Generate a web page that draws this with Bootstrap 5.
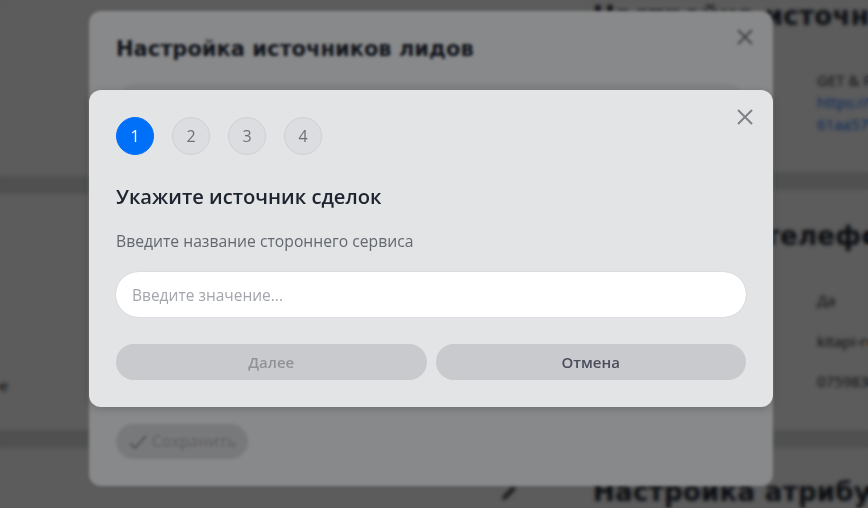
<!DOCTYPE html>
<html lang="ru">
    <head>
        <meta charset="UTF-8">
        <meta name="viewport" content="width=device-width, initial-scale=1.0">
        <title>Настройка источников лидов</title>
        <link href="https://cdn.jsdelivr.net/npm/bootstrap@5.3.3/dist/css/bootstrap.min.css" rel="stylesheet">
        <style>
            html, body {
                height: 100%;
                overflow: hidden;
            }
            body {
                background-color: #dedfdf;
                font-family: "Open Sans", "Noto Sans", sans-serif;
                color: #1e2530;
            }
            /* page under the dialogs */
            .page-grid {
                display: grid;
                grid-template-columns: 565px 1fr;
                height: 100%;
            }
            .page-col {
                display: flex;
                flex-direction: column;
                gap: 18px;
            }
            .page-panel {
                background: #fff;
                padding-left: 28px;
                flex: none;
                overflow: hidden;
                white-space: nowrap;
            }
            .panel-a { height: 172px; }
            .panel-b { height: 240px; padding-top: 30px; }
            .panel-c { height: 80px; padding-top: 28px; }
            .left-a { height: 176px; }
            .left-b { height: 236px; }
            .left-c {
                height: 80px;
                position: relative;
            }
            .panel-title {
                font-family: "DejaVu Sans", "Noto Sans", sans-serif;
                font-weight: 700;
                font-size: 26px;
                letter-spacing: .3px;
                line-height: 32px;
                margin: 0;
            }
            .panel-values {
                padding-left: 224px;
                margin-top: 37px;
                font-size: 15px;
                line-height: 22px;
            }
            .panel-values-b {
                gap: 18.5px;
            }
            .page-link-text {
                color: #0d6efd;
                text-decoration: none;
            }
            .stub-word {
                font-size: 15px;
                margin-top: 181px;
                margin-left: -28px;
                display: block;
                line-height: 20px;
            }
            .pencil-mark {
                position: absolute;
                left: 499px;
                top: 34px;
            }
            /* dialogs */
            .dim-layer {
                position: fixed;
                inset: 0;
                background: rgba(0, 0, 0, .4);
                backdrop-filter: blur(1.5px);
            }
            .sheet {
                position: fixed;
                left: 89px;
                width: 684px;
                background: #e3e4e6;
                border-radius: 12px;
                padding: 26px;
            }
            .sheet-back {
                top: 11px;
                height: 475px;
            }
            .sheet-front {
                top: 90px;
                height: 317px;
                padding-top: 27px;
                box-shadow: 0 2px 8px rgba(0, 0, 0, .2);
            }
            .sheet-x {
                position: absolute;
                top: 17px;
                right: 19px;
                width: 18px;
                height: 18px;
                padding: 0;
                border: 0;
                background: none;
                line-height: 0;
            }
            .sheet-front .sheet-x {
                top: 18px;
            }
            .back-title {
                font-family: "DejaVu Sans", "Noto Sans", sans-serif;
                font-weight: 700;
                font-size: 21px;
                line-height: 24px;
                margin: 0 0 22px 1px;
            }
            .back-field {
                height: 48px;
                background: #d9dadc;
                border-radius: 24px;
            }
            .back-save {
                position: absolute;
                left: 27px;
                top: 413px;
                height: 35px;
                width: 132px;
                background: #c9cacd;
                color: #a9abb0;
                border-radius: 18px;
                font-size: 15.5px;
                font-weight: 600;
            }
            .step-row {
                gap: 18px;
                margin-left: 1px;
                margin-bottom: 27px;
            }
            .step-dot {
                width: 38px;
                height: 38px;
                border-radius: 50%;
                border: 1px solid #cfd0d3;
                background: #dcdde0;
                color: #6c7078;
                font-size: 16px;
            }
            .step-dot.is-current {
                background: #0070f8;
                border-color: #0070f8;
                color: #fff;
            }
            .step-title {
                font-size: 20.15px;
                font-weight: 600;
                line-height: 28px;
                color: #1e2530;
                margin: 0 0 21px 1px;
            }
            .step-hint {
                font-size: 15.7px;
                line-height: 20px;
                color: #63676f;
                margin: 0 0 20px 1px;
            }
            .value-input.form-control {
                height: 47px;
                border-radius: 24px;
                border: 1px solid #dcdde0;
                padding: 0 16px;
                font-size: 15.5px;
                box-shadow: none;
                margin-bottom: 26px;
            }
            .value-input::placeholder {
                color: #a3a6ac;
            }
            .step-btn.btn {
                height: 36px;
                border: 0;
                border-radius: 18px;
                background: #c9cacd;
                color: #4a4c5c;
                font-size: 15px;
                font-weight: 600;
                padding: 0;
                opacity: 1;
            }
            .step-btn.btn:disabled {
                color: #909297;
                background: #c9cacd;
            }
            .step-actions {
                gap: 9px;
                margin: 0 1px;
            }
        </style>
    </head>
    <body>
        <!-- Page behind the dialogs -->
        <div class="page-grid">
            <div class="page-col">
                <div class="page-panel left-a"></div>
                <div class="page-panel left-b">
                    <span class="stub-word">е</span>
                </div>
                <div class="page-panel left-c">
                    <svg class="pencil-mark" width="20" height="20" viewBox="0 0 20 20" fill="#3c4048">
                        <path d="M3 18l1-4L14 4l3 3L7 17z"/>
                    </svg>
                </div>
            </div>
            <div class="page-col">
                <div class="page-panel panel-a">
                    <h2 class="panel-title">Настройка источников</h2>
                    <div class="panel-values">
                        <div>GET &amp; POST</div>
                        <a class="page-link-text" href="#">https://kitapi-ru.ru/webhook/<br>61aa57d3e2</a>
                    </div>
                </div>
                <div class="page-panel panel-b">
                    <h2 class="panel-title">Настройка телефонии</h2>
                    <div class="panel-values panel-values-b d-flex flex-column">
                        <div>Да</div>
                        <div>kitapi-ru</div>
                        <div>0759831</div>
                    </div>
                </div>
                <div class="page-panel panel-c">
                    <h2 class="panel-title">Настройка атрибутов</h2>
                </div>
            </div>
        </div>
        <div class="dim-layer"></div>

        <!-- First dialog -->
        <div class="sheet sheet-back">
            <button type="button" class="sheet-x" aria-label="Закрыть">
                <svg width="18" height="18" viewBox="0 0 18 18" stroke="#6c7078" stroke-width="2" fill="none"><path d="M2 2l14 14M16 2L2 16"/></svg>
            </button>
            <h5 class="back-title">Настройка источников лидов</h5>
            <div class="back-field"></div>
            <div class="back-save d-flex align-items-center justify-content-center gap-1">
                <svg width="20" height="16" viewBox="0 0 20 16" stroke="#8d9096" stroke-width="2" fill="none"><path d="M2 9l5 5L18 2"/></svg>
                <span>Сохранить</span>
            </div>
        </div>
        <div class="dim-layer"></div>

        <!-- Second dialog, step 1 -->
        <div class="sheet sheet-front d-flex flex-column">
            <button type="button" class="sheet-x" aria-label="Закрыть">
                <svg width="18" height="18" viewBox="0 0 18 18" stroke="#7f8288" stroke-width="2" fill="none"><path d="M2 2l14 14M16 2L2 16"/></svg>
            </button>
            <div class="d-flex step-row">
                <div class="step-dot is-current d-flex align-items-center justify-content-center">1</div>
                <div class="step-dot d-flex align-items-center justify-content-center">2</div>
                <div class="step-dot d-flex align-items-center justify-content-center">3</div>
                <div class="step-dot d-flex align-items-center justify-content-center">4</div>
            </div>
            <h5 class="step-title">Укажите источник сделок</h5>
            <p class="step-hint">Введите название стороннего сервиса</p>
            <input type="text" class="form-control value-input" placeholder="Введите значение...">
            <div class="d-flex step-actions">
                <button type="button" class="btn step-btn flex-fill w-50" disabled>Далее</button>
                <button type="button" class="btn step-btn flex-fill w-50">Отмена</button>
            </div>
        </div>

        <script src="https://cdn.jsdelivr.net/npm/bootstrap@5.3.3/dist/js/bootstrap.bundle.min.js"></script>
    </body>
</html>
